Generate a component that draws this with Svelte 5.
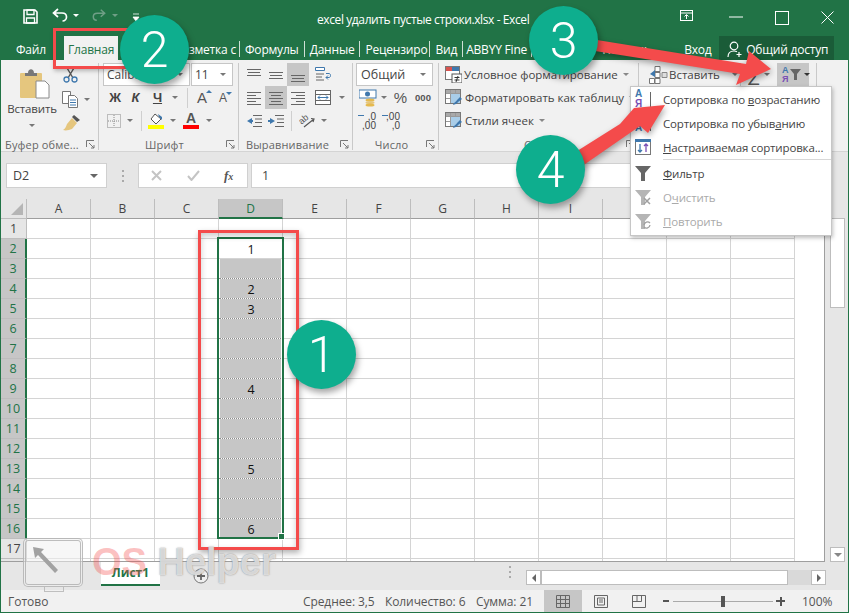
<script>
  const cols = ['A','B','C','D','E','F','G','H','I','J','K','L'];
  const rows = Array.from({ length: 17 }, (_, i) => i + 1);
  const values = { 2: '1', 4: '2', 5: '3', 9: '4', 13: '5', 16: '6' };
  const lineSets = {
    top: [[0,14,2],[1,13,5],[0,14,8]],
    mid: [[0,14,5],[1,13,8],[0,14,11]],
    bot: [[0,14,8],[1,13,11],[0,14,14]],
    left: [[0,14,2],[0,9,5],[0,14,8],[0,9,11],[0,14,14]],
    center: [[0,14,2],[2,12,5],[0,14,8],[2,12,11],[0,14,14]],
    right: [[0,14,2],[5,14,5],[0,14,8],[5,14,11],[0,14,14]]
  };
</script>

{#snippet caret(cls = '')}
  <span class={'caret ' + cls}></span>
{/snippet}
{#snippet lines(name)}
  <svg class="lines" width="14" height="16" viewBox="0 0 14 16">
    {#each lineSets[name] as l}<line x1={l[0]} x2={l[1]} y1={l[2] + .5} y2={l[2] + .5} />{/each}
  </svg>
{/snippet}
{#snippet launcher()}
  <svg class="launcher" width="9" height="9" viewBox="0 0 9 9"><path d="M.5 7V.5H8M3 3l5 5M5 8h3V5" fill="none" stroke="#777"/></svg>
{/snippet}
{#snippet tableIcon()}
  <svg width="18" height="18" viewBox="0 0 18 18">
    <rect x=".5" y=".5" width="15" height="14" fill="#fff" stroke="#777"/>
    <rect x="1" y="1" width="14" height="3" fill="#a9a9a9"/>
    <path d="M5.500 1v13M10.500 1v13M1 4.500h14M1 9.500h14" stroke="#999"/>
    <rect x="6" y="5" width="9" height="9" fill="#a9cde8"/>
    <path d="M8 16c1-3 3-3 4-5l3-3 2 2-4 3c-1 2-3 2-5 3z" fill="#3f78ad"/>
  </svg>
{/snippet}

<div class="app">
  <header class="title">
    <div class="qat">
      <svg class="save" width="15" height="15" viewBox="0 0 15 15"><path d="M1 1h11l2 2v11H1z" fill="none" stroke="#fff" stroke-width="1.600"/><path d="M4 1h7v4.500H4zM3.500 9h8v5h-8z" fill="none" stroke="#fff" stroke-width="1.300"/></svg>
      <svg class="undo" width="16" height="14" viewBox="0 0 16 14"><path d="M6 1 1.500 5 6 9M2 5h8c3 0 4.500 2 4.500 4s-1.500 4-4 4" fill="none" stroke="#fff" stroke-width="1.700"/></svg>
      <span class="tri white"></span>
      <svg class="redo" width="14" height="14" viewBox="0 0 16 14"><path d="M10 1l4.500 4L10 9M14 5H6C3 5 1.500 7 1.500 9s1.500 4 4 4" fill="none" stroke="#6f9f86" stroke-width="1.700"/></svg>
      <span class="tri dim"></span>
      <svg class="more" width="8" height="9" viewBox="0 0 8 9"><path d="M1 1h6M1 4h6L4 8z" fill="#fff" stroke="#fff" stroke-width=".8"/></svg>
    </div>
    <div class="doc">excel удалить пустые строки.xlsx - Excel</div>
    <div class="winbtns">
      <svg class="wopt" width="13" height="11" viewBox="0 0 13 11"><rect x=".5" y=".5" width="12" height="10" fill="none" stroke="#fff"/><path d="M.5 3h12M6.500 9V5M4.500 6.500l2-2 2 2" fill="none" stroke="#fff"/></svg>
      <svg class="wmin" width="14" height="2" viewBox="0 0 14 2"><path d="M0 1h14" stroke="#fff"/></svg>
      <svg class="wmax" width="14" height="14" viewBox="0 0 14 14"><rect x=".5" y=".5" width="13" height="13" fill="none" stroke="#fff"/></svg>
      <svg class="wclose" width="13" height="13" viewBox="0 0 13 13"><path d="M.5.500l12 12M12.500.5l-12 12" stroke="#fff"/></svg>
    </div>
  </header>

  <nav class="tabs">
    <span class="tab file">Файл</span>
    <span class="tab home">Главная</span>
    <span class="tab t-layout">Разметка с</span>
    <span class="tab sep">Формулы</span>
    <span class="tab sep">Данные</span>
    <span class="tab sep t-review">Рецензиро</span>
    <span class="tab sep">Вид</span>
    <span class="tab sep t-abbyy">ABBYY Fine</span>
    <span class="tab t-help">Помощь</span>
    <span class="tab t-login">Вход</span>
    <span class="share">
      <svg width="16" height="17" viewBox="0 0 16 17"><circle cx="7" cy="5" r="3.800" fill="none" stroke="#fff" stroke-width="1.200"/><path d="M1 16c0-4 2-6 6-6 1 0 2 .2 3 .7M12 11v5M9.500 13.500h5" fill="none" stroke="#fff" stroke-width="1.200"/></svg>
      Общий доступ
    </span>
  </nav>

  <section class="ribbon">
    <div class="group g-clip">
      <div class="gbody clip-body">
        <div class="paste">
          <svg width="30" height="31" viewBox="0 0 30 31">
            <rect x="0" y="5" width="22" height="25" rx="1" fill="#e5c67e"/>
            <path d="M5 5h3c0-5 6-5 6 0h3v3H5z" fill="#787878"/>
            <path d="M16 13h9l4 4v13H16z" fill="#fff" stroke="#8a8a8a"/>
          </svg>
          <span class="paste-label">Вставить</span>
          {@render caret('paste-caret')}
        </div>
        <div class="clip-tools">
          <svg width="15" height="15" viewBox="0 0 15 15"><path d="M4 0l6 10M11 0 5 10" stroke="#555" stroke-width="1.400"/><circle cx="3.500" cy="11.500" r="2.500" fill="none" stroke="#3f78ad" stroke-width="1.300"/><circle cx="11.500" cy="11.500" r="2.500" fill="none" stroke="#3f78ad" stroke-width="1.300"/></svg>
          <div class="copy-row">
            <svg width="17" height="17" viewBox="0 0 17 17"><path d="M.5.500h8v12h-8z" fill="#fff" stroke="#777"/><path d="M6.500 4.500h6l3 3v9h-9z" fill="#fff" stroke="#777"/><path d="M8 9h6M8 11.500h6M8 14h6" stroke="#3f78ad"/></svg>
            {@render caret()}
          </div>
          <svg class="brush" width="17" height="16" viewBox="0 0 17 16"><path d="M11 0l6 5-3 2-5-5z" fill="#555"/><path d="M9 3l5 5-5 6c-3 1-6 2-9 1 2-1 3-3 4-6z" fill="#e5c67e"/></svg>
        </div>
      </div>
      <div class="glabel"><span class="label-text">Буфер обме...</span>{@render launcher()}</div>
    </div>

    <div class="group g-font">
      <div class="gbody rows">
        <div class="row font-1">
          <span class="combo"><span>Calibri</span>{@render caret()}</span>
          <span class="combo"><span>11</span>{@render caret()}</span>
        </div>
        <div class="row font-2">
          <b class="fb">Ж</b><b class="fb it">К</b><b class="fb un">Ч</b>
          {@render caret()}
          <i class="vsep"></i>
          <span class="grow big">A<em class="up"></em></span>
          <span class="grow small">A<em class="down"></em></span>
        </div>
        <div class="row font-3">
          <svg width="14" height="14" viewBox="0 0 14 14"><rect x=".5" y=".5" width="13" height="13" fill="none" stroke="#888" stroke-dasharray="1 1"/><path d="M7 1v12M1 7h12" stroke="#888" stroke-dasharray="1 1"/></svg>
          {@render caret()}
          <i class="vsep"></i>
          <span class="color-btn">
            <svg width="15" height="12" viewBox="0 0 15 12"><path d="M6 1l6 5-5 5-5-5z" fill="#fff" stroke="#555"/><path d="M9 1l4 3v3l-3-3z" fill="#3f78ad"/></svg>
            <i class="swatch yellow"></i>
          </span>
          {@render caret()}
          <span class="color-btn"><span class="fc">A</span><i class="swatch redline"></i></span>
          {@render caret()}
        </div>
      </div>
      <div class="glabel"><span class="label-text centered">Шрифт</span>{@render launcher()}</div>
    </div>

    <div class="group g-align">
      <div class="gbody rows">
        <div class="row align-row">
          <span class="cell22">{@render lines('top')}</span>
          <span class="cell22">{@render lines('mid')}</span>
          <span class="cell22 on">{@render lines('bot')}</span>
          <svg class="wrap" width="16" height="16" viewBox="0 0 16 16"><path d="M.5.500h9v3h-9z" fill="#fff" stroke="#3f78ad"/><path d="M1 7h8M1 10h6M1 13h8" stroke="#666"/><path d="M11 6.500h3c2 0 2 4 0 4h-3m2-2-2 2 2 2" fill="none" stroke="#3f78ad"/></svg>
        </div>
        <div class="row align-row">
          <span class="cell22">{@render lines('left')}</span>
          <span class="cell22 on">{@render lines('center')}</span>
          <span class="cell22">{@render lines('right')}</span>
          <svg class="wrap" width="16" height="15" viewBox="0 0 16 15"><rect x=".5" y=".5" width="15" height="14" fill="#fff" stroke="#666"/><path d="M1 4.500h14M1 10.500h14" stroke="#666"/><path d="M3 7.500h10M5 5.500l-2 2 2 2M11 5.500l2 2-2 2" fill="none" stroke="#3f78ad"/></svg>
          {@render caret()}
        </div>
        <div class="row align-3">
          <svg width="16" height="12" viewBox="0 0 16 12"><path d="M7 .5h9M9 4h7M9 7.500h7M7 11.500h9" stroke="#666"/><path d="M6 3 1 6l5 3zM6 5h1v2H6z" fill="#3f78ad"/></svg>
          <svg width="16" height="12" viewBox="0 0 16 12"><path d="M7 .5h9M9 4h7M9 7.500h7M7 11.500h9" stroke="#666"/><path d="M2 3l5 3-5 3zM0 5h3v2H0z" fill="#3f78ad"/></svg>
          <i class="vsep"></i>
          <svg width="16" height="16" viewBox="0 0 16 16"><path d="M5 14 15 6M12 5.500l3 .5-1 3" fill="none" stroke="#555" stroke-width="1.200"/><text x="0" y="9" class="ab" transform="rotate(-40 5 7)">ab</text></svg>
          {@render caret()}
        </div>
      </div>
      <div class="glabel"><span class="label-text al-label">Выравнивание</span>{@render launcher()}</div>
    </div>

    <div class="group g-num">
      <div class="gbody rows">
        <div class="row num-1"><span class="combo wide"><span>Общий</span>{@render caret()}</span></div>
        <div class="row num-2">
          <svg width="18" height="18" viewBox="0 0 18 18"><rect x="0" y="1" width="17" height="8" fill="#fff" stroke="#3f78ad"/><circle cx="8.500" cy="5" r="2.500" fill="#3f78ad"/><ellipse cx="11" cy="11" rx="4.500" ry="1.600" fill="#e5b94e"/><ellipse cx="11" cy="13.500" rx="4.500" ry="1.600" fill="#e5c67e"/><ellipse cx="11" cy="16" rx="4.500" ry="1.600" fill="#e5b94e"/></svg>
          {@render caret()}
          <span class="pct">%</span>
          <span class="thou">000</span>
        </div>
        <div class="row num-3">
          <span class="dec"><em class="larr"></em>,0<br />,00</span>
          <span class="dec"><em class="rarr"></em>,00<br />,0</span>
        </div>
      </div>
      <div class="glabel"><span class="label-text centered">Число</span>{@render launcher()}</div>
    </div>

    <div class="group g-styles">
      <div class="gbody rows">
        <div class="row style-row">
          <svg width="17" height="17" viewBox="0 0 17 17"><rect x=".5" y=".5" width="14" height="13" fill="#fff" stroke="#777"/><rect x="1" y="1" width="6" height="4" fill="#d9534f"/><rect x="7" y="1" width="7" height="4" fill="#3f78ad"/><rect x="7" y="8" width="10" height="9" fill="#fff" stroke="#555"/><path d="M9.500 11.500h5M9.500 14h5M13 10l-2 6" stroke="#333" fill="none"/></svg>
          <span>Условное форматирование</span><span class="tiny-caret"></span>
        </div>
        <div class="row style-row">{@render tableIcon()}<span>Форматировать как таблицу</span><span class="tiny-caret"></span></div>
        <div class="row style-row">{@render tableIcon()}<span>Стили ячеек</span><span class="tiny-caret"></span></div>
      </div>
      <div class="glabel"><span class="label-text styles-label">Стили</span>{@render launcher()}</div>
    </div>

    <div class="group g-cells">
      <div class="gbody rows">
        <div class="row cells-row">
          <svg width="19" height="18" viewBox="0 0 19 18"><path d="M6 .5h5v5H6zM6 6.500h5v5H6zM.5 12.500h5v5h-5zM6 12.500h5v5H6z" fill="#fff" stroke="#777"/><path d="M13 6.500h5v5h-5z" fill="#ddd" stroke="#888"/><path d="M6 4 1 8l5 3z" fill="#3f78ad"/></svg>
          <span>Вставить</span>{@render caret()}
        </div>
      </div>
      <div class="glabel"></div>
    </div>

    <div class="group g-edit">
      <div class="gbody rows">
        <div class="row edit-row">
          <span class="sigma">∑</span>
          {@render caret()}
          <span class="sort-btn">
            <span class="az"><span class="a-l">A</span><span class="ya-l">Я</span></span>
            <svg width="11" height="11" viewBox="0 0 11 11"><path d="M0 0h11L7 5v6H4V5z" fill="#666"/></svg>
            {@render caret()}
          </span>
        </div>
      </div>
      <div class="glabel"></div>
    </div>
  </section>

  <section class="fbar">
    <div class="namebox"><span>D2</span>{@render caret('dark')}</div>
    <div class="grip"><i></i><i></i><i></i></div>
    <div class="fxbox">
      <svg width="11" height="11" viewBox="0 0 11 11"><path d="M1 1l9 9M10 1l-9 9" stroke="#c4c4c4" stroke-width="2"/></svg>
      <svg width="13" height="11" viewBox="0 0 13 11"><path d="M1 6l3.500 4L12 1" fill="none" stroke="#c4c4c4" stroke-width="2"/></svg>
      <span class="fx">f<small>x</small></span>
    </div>
    <div class="finput">1</div>
  </section>

  <section class="sheet">
    <div class="gridwrap">
      <div class="colhead">
        <div class="corner"><span></span></div>
        {#each cols as c}
          <div class={'ch' + (c === 'D' ? ' active' : '')}>{c}</div>
        {/each}
      </div>
      {#each rows as r}
        <div class="grow-row">
          <div class={'rh' + (r >= 2 && r <= 16 ? ' active' : '')}>{r}</div>
          {#each cols as c}
            {#if c === 'D' && r >= 2 && r <= 16}
              <div class={'cell sel' + (r === 2 ? ' first' : '')}><span>{values[r] ?? ''}</span></div>
            {:else}
              <div class="cell"></div>
            {/if}
          {/each}
        </div>
      {/each}
      <div class="grow-row tail">
        <div class="rh"></div>
        {#each cols as c}<div class="cell"></div>{/each}
      </div>
    </div>
    <div class="vscroll">
      <div class="vthumb"></div>
      <div class="vdown"><i></i></div>
    </div>
  </section>

  <section class="sheetbar">
    <div class="sheettab">Лист1</div>
    <div class="addsheet">
      <svg width="16" height="16" viewBox="0 0 16 16"><circle cx="8" cy="8" r="7" fill="#eee" stroke="#777"/><path d="M8 4v8M4 8h8" stroke="#666" stroke-width="1.800"/></svg>
    </div>
    <div class="grip h"><i></i><i></i><i></i></div>
    <div class="hscroll">
      <span class="hbtn"><i class="l"></i></span>
      <span class="hthumb"></span>
      <span class="hgap"></span>
      <span class="hbtn"><i class="r"></i></span>
    </div>
  </section>

  <footer class="status">
    <span class="ready">Готово</span>
    <span class="stat s1">Среднее: 3,5</span>
    <span class="stat s2">Количество: 6</span>
    <span class="stat s3">Сумма: 21</span>
    <span class="vbtn on">
      <svg width="14" height="13" viewBox="0 0 14 13"><path d="M.5.500h13v12H.5zM.5 4.500h13M.5 8.500h13M4.500.5v12M9.500.5v12" fill="none" stroke="#666"/></svg>
    </span>
    <span class="vbtn">
      <svg width="14" height="13" viewBox="0 0 14 13"><path d="M.5.500h13v12H.5z" fill="none" stroke="#666"/><path d="M3.500 3v7h7V3zM5 5h4M5 7h4" fill="none" stroke="#666"/></svg>
    </span>
    <span class="vbtn">
      <svg width="14" height="13" viewBox="0 0 14 13"><path d="M.5.500h13v12H.5zM.5 6.500h9v-6M5 .5v6" fill="none" stroke="#666"/></svg>
    </span>
    <span class="zoomctl">
      <i class="zminus"></i>
      <span class="ztrack"><i></i></span>
      <i class="zplus"></i>
    </span>
    <span class="zval">100%</span>
  </footer>

  <div class="menu">
    <div class="mi">
      <span class="mic"><span class="az-m"><span class="a-l">A</span><span class="ya-l">Я</span></span><i class="marr"></i></span>
      <span>Сортировка по <u>в</u>озрастанию</span>
    </div>
    <div class="mi">
      <span class="mic"><span class="az-m"><span class="ya-l">Я</span><span class="a-l">A</span></span><i class="marr"></i></span>
      <span>Сортировка по убыв<u>а</u>нию</span>
    </div>
    <div class="mi">
      <span class="mic">
        <svg width="16" height="16" viewBox="0 0 16 16"><rect x=".5" y=".5" width="15" height="15" fill="#fff" stroke="#777"/><rect x="0" y="0" width="16" height="3" fill="#3f78ad"/><path d="M5 5v8M3 11l2 2 2-2" fill="none" stroke="#3f78ad" stroke-width="1.300"/><path d="M11 13V5M9 7l2-2 2 2" fill="none" stroke="#7a4fb5" stroke-width="1.300"/></svg>
      </span>
      <span><u>Н</u>астраиваемая сортировка...</span>
    </div>
    <div class="msep"></div>
    <div class="mi">
      <span class="mic"><svg width="16" height="15" viewBox="0 0 16 15"><path d="M0 0h16L10 7v8H6V7z" fill="#666"/></svg></span>
      <span><u>Ф</u>ильтр</span>
    </div>
    <div class="mi off">
      <span class="mic"><svg width="16" height="15" viewBox="0 0 16 15"><path d="M0 0h16L10 7v8H6V7z" fill="#b5b5b5"/><path d="M9 8l6 6M15 8l-6 6" stroke="#a0a0a0" stroke-width="1.500"/></svg></span>
      <span>О<u>ч</u>истить</span>
    </div>
    <div class="mi off">
      <span class="mic"><svg width="16" height="15" viewBox="0 0 16 15"><path d="M0 0h16L10 7v8H6V7z" fill="#b5b5b5"/><path d="M9 11a3.500 3.500 0 0 1 6-2M15 11a3.500 3.500 0 0 1-6 2" fill="none" stroke="#a0a0a0" stroke-width="1.300"/></svg></span>
      <span><u>П</u>овторить</span>
    </div>
  </div>

  <div class="sel-box"><i class="handle"></i></div>
  <div class="redbox r1"></div>
  <div class="redbox r2"></div>

  <svg class="arrows" width="849" height="613" viewBox="0 0 849 613">
    <polygon points="597,40 746,64 749,51 771,69 736,85 740,74 595,51" />
    <polygon points="566,158 620,124 634,108 665,105 648,133 640,126 575,171" />
  </svg>

  <div class="badge b1">1</div>
  <div class="badge b2">2</div>
  <div class="badge b3">3</div>
  <div class="badge b4">4</div>

  <div class="wm">
    <div class="wm-box">
      <svg width="30" height="30" viewBox="0 0 30 30"><path d="M1 1l11 2-3 3 17 18-3 3L6 9l-3 3z" fill="#a2a2a2"/></svg>
      <i class="wm-foot"></i>
    </div>
    <div class="wm-text"><span class="os">OS</span> <span class="helper">Helper</span></div>
  </div>
</div>

<style>
  :global(body) { margin: 0; background: #e6e6e6; }
  .app {
    position: relative; width: 849px; height: 613px; overflow: hidden;
    display: flex; flex-direction: column;
    font-family: "Open Sans", "Noto Sans", sans-serif; font-size: 12px; color: #444;
    background: #e6e6e6; box-sizing: border-box;
    border-left: 1px solid #217346; border-right: 1px solid #217346; border-bottom: 1px solid #217346;
  }
  svg { display: block; flex: none; }

  /* title */
  .title { height: 36px; flex: none; background: #217346; margin: 0 -1px; display: flex; position: relative; color: #fff; }
  .qat { width: 317px; display: flex; align-items: flex-start; flex: none; }
  .save { margin: 9px 0 0 23px; }
  .undo { margin: 8px 0 0 14px; }
  .redo { margin: 8px 0 0 13px; }
  .more { margin: 13px 0 0 14px; }
  .tri { width: 0; height: 0; border: 3px solid transparent; border-bottom: 0; margin: 14px 0 0 5px; }
  .tri.white { border-top: 3px solid #fff; }
  .tri.dim { border-top: 3px solid #6f9f86; margin-left: 6px; }
  .doc { margin-top: 12px; width: 363px; font-size: 12px; letter-spacing: -.4px; line-height: 16px; white-space: nowrap; }
  .winbtns { display: flex; align-items: flex-start; flex: 1; }
  .wopt { margin-top: 10px; }
  .wmin { margin: 16px 0 0 36px; }
  .wmax { margin: 11px 0 0 32px; }
  .wclose { margin: 11px 0 0 32px; }

  /* tabs */
  .tabs { height: 24px; flex: none; background: #217346; margin: 0 -1px; display: flex; align-items: stretch; color: #fff; }
  .tab { display: flex; align-items: center; padding-top: 2px; white-space: nowrap; overflow: hidden; font-size: 12px; letter-spacing: -.2px; box-sizing: border-box; }
  .file { width: 64px; padding-left: 16px; }
  .home { width: 54px; background: #f1f1f1; color: #217346; padding-left: 4px; }
  .t-layout { margin: 5px 0 3px 58px; width: 64px; justify-content: flex-end; padding: 0 3px 0 0; border-right: 1px solid #cfe0d6; }
  .sep { padding: 0 5px; border-right: 1px solid #cfe0d6; margin: 5px 0 3px; }
  .t-review { width: 70px; }
  .t-abbyy { width: 69px; padding-left: 3px; }
  .t-help { margin-left: 70px; width: 75px; }
  .t-login { width: 35px; margin-left: 7px; }
  .share { width: 115px; background: #1a5c38; display: flex; align-items: center; gap: 3px; padding: 2px 0 0 8px; box-sizing: border-box; white-space: nowrap; font-size: 12px; letter-spacing: -.2px; }

  /* ribbon */
  .ribbon { height: 92px; flex: none; background: #f1f1f1; border-bottom: 1px solid #d4d4d4; box-sizing: border-box; display: flex; padding-top: 3px; }
  .group { display: flex; flex-direction: column; border-right: 1px solid #c9c9c9; box-sizing: border-box; height: 87px; flex: none; position: relative; }
  .g-clip { width: 98px; }
  .g-font { width: 140px; }
  .g-align { width: 114px; }
  .g-num { width: 86px; }
  .g-styles { width: 200px; }
  .g-cells { width: 102px; }
  .g-edit { width: 76px; }
  .gbody { height: 69px; flex: none; }
  .rows { display: grid; grid-template-rows: 23px 23px 23px; }
  .glabel { display: flex; align-items: center; height: 18px; box-sizing: border-box; padding: 6px 3px 0 4px; justify-content: flex-end; position: relative; }
  .label-text { margin-right: auto; letter-spacing: .15px; color: #666; white-space: nowrap; font-size: 11px; }
  .label-text.centered { margin: 0 auto; }
  .al-label { margin-left: 3px; }
  .styles-label { margin-left: 81px; }
  .launcher { flex: none; }
  .row { display: flex; align-items: center; }
  .caret { display: inline-block; width: 0; height: 0; border: 3.500px solid transparent; border-bottom: 0; border-top: 3.500px solid #777; flex: none; }
  .caret.dark { border-width: 4px; border-bottom: 0; border-top-color: #666; }

  .clip-body { display: flex; }
  .paste { width: 60px; display: flex; flex-direction: column; align-items: center; padding: 5px 0 0 2px; box-sizing: border-box; }
  .paste svg { margin-left: 5px; }
  .paste-label { margin-top: 2px; color: #444; font-size: 11.500px; letter-spacing: -.15px; line-height: 16px; }
  :global(.paste-caret) { margin-top: 7px; }
  .clip-tools { display: flex; flex-direction: column; padding-left: 1px; }
  .clip-tools > svg:first-child { margin: 5px 0 0 1px; }
  .copy-row { display: flex; align-items: center; gap: 5px; margin-top: 8px; }
  .brush { margin: 7px 0 0 1px; }

  .combo { height: 23px; background: #fff; border: 1px solid #c6c6c6; box-sizing: border-box; display: flex; align-items: center; justify-content: space-between; padding: 0 6px 0 3px; font-size: 12px; color: #444; }
  .font-1 { padding-left: 4px; gap: 1px; }
  .font-1 .combo:first-child { width: 87px; }
  .font-1 .combo:last-child { width: 42px; }
  .font-2, .font-3 { display: grid; align-items: center; justify-items: center; }
  .font-2 { grid-template-columns: 20px 21px 23px 12px 12px 18px 24px; padding-left: 6px; }
  .font-3 { grid-template-columns: 17px 16px 6px 24px 10px 26px 10px; padding-left: 6px; }
  .fb { font-family: "Liberation Sans", sans-serif; font-size: 13px; color: #444; }
  .fb.it { font-style: italic; }
  .fb.un { text-decoration: underline; }
  .vsep { display: block; width: 1px; height: 20px; background: #cfcfcf; }
  .grow { position: relative; color: #555; font-family: "Liberation Sans", sans-serif; }
  .grow.big { font-size: 15px; }
  .grow.small { font-size: 12px; }
  .grow em { position: absolute; right: -5px; top: 1px; border: 3px solid transparent; }
  .up { border-top: 0 !important; border-bottom: 3px solid #3f78ad !important; }
  .down { border-bottom: 0 !important; border-top: 3px solid #3f78ad !important; }
  .color-btn { display: flex; flex-direction: column; align-items: center; width: 16px; }
  .fc { font-family: "Liberation Sans", sans-serif; font-weight: bold; font-size: 14px; line-height: 13px; color: #555; }
  .swatch { display: block; width: 16px; height: 4px; }
  .yellow { background: #ffff00; }
  .redline { background: #ff0000; }

  .align-row { display: flex; padding-left: 4px; }
  .cell22 { width: 22px; height: 23px; display: flex; align-items: center; justify-content: center; flex: none; }
  .cell22.on { background: #c6c6c6; }
  .lines line { stroke: #666; stroke-width: 1; }
  .wrap { margin: 0 8px 0 6px; }
  .align-3 { display: grid; grid-template-columns: 22px 22px 8px 24px 10px; padding-left: 4px; justify-items: center; }
  .ab { font-size: 9px; fill: #555; font-family: "Liberation Sans", sans-serif; }

  .num-1 { padding-left: 3px; }
  .combo.wide { width: 77px; font-size: 12.500px; padding-left: 4px; }
  .num-2 { display: grid; grid-template-columns: 22px 10px 23px 22px; padding-left: 4px; align-items: center; justify-items: center; }
  .pct { font-family: "Liberation Sans", sans-serif; font-size: 15px; color: #555; }
  .thou { font-family: "Liberation Sans", sans-serif; font-size: 9.500px; font-weight: bold; color: #555; }
  .num-3 { display: flex; padding-left: 3px; }
  .dec { width: 24px; position: relative; font-family: "Liberation Sans", sans-serif; font-size: 10px; line-height: 9px; color: #444; text-align: right; padding-right: 4px; box-sizing: border-box; }
  .dec em { position: absolute; left: 2px; top: 3px; width: 6px; height: 1px; background: #3f78ad; }

  .style-row { padding-left: 6px; gap: 2px; font-size: 11.500px; white-space: nowrap; letter-spacing: -.02px; }
  .tiny-caret { width: 0; height: 0; border: 3px solid transparent; border-bottom: 0; border-top: 3px solid #888; margin-left: 3px; }
  .cells-row { padding-left: 10px; font-size: 11.500px; }
  .cells-row span:not(.caret) { margin: 0 12px 0 1px; }
  .edit-row { position: relative; padding-left: 6px; }
  .sigma { font-family: "Liberation Sans", sans-serif; font-size: 19px; color: #555; width: 17px; }
  .sort-btn { width: 32px; height: 23px; background: #c6c6c6; margin-left: 7px; display: flex; align-items: center; padding-left: 5px; gap: 1px; box-sizing: border-box; }
  .sort-btn :global(.caret) { margin-left: 2px; border-top-color: #333; }
  .az, .az-m { display: flex; flex-direction: column; font-family: "Liberation Sans", sans-serif; font-size: 9px; line-height: 9px; font-weight: bold; width: 8px; }
  .a-l { color: #3f78ad; }
  .ya-l { color: #7a4fb5; }

  /* formula bar */
  .fbar { height: 47px; flex: none; box-sizing: border-box; display: flex; align-items: flex-start; padding-top: 11px; }
  .namebox { width: 101px; height: 25px; margin-left: 5px; background: #fff; border: 1px solid #d0d0d0; box-sizing: border-box; display: flex; align-items: center; justify-content: space-between; padding: 0 8px 0 6px; font-size: 12.500px; }
  .grip { display: flex; flex-direction: column; gap: 3px; width: 31px; align-items: center; padding-top: 7px; }
  .grip i { display: block; width: 2px; height: 2px; background: #aaa; }
  .fxbox { width: 110px; height: 25px; background: #fff; border: 1px solid #d0d0d0; box-sizing: border-box; display: flex; align-items: center; gap: 25px; padding-left: 12px; }
  .fx { font-family: "Liberation Serif", serif; font-style: italic; font-weight: bold; font-size: 13px; color: #555; margin-left: -1px; }
  .fx small { font-size: 10px; }
  .finput { width: 579px; height: 25px; margin-left: 3px; background: #fff; border: 1px solid #d0d0d0; box-sizing: border-box; padding: 0 0 0 10px; display: flex; align-items: center; font-size: 12.500px; }

  /* sheet */
  .sheet { height: 363px; flex: none; display: flex; position: relative; }
  .gridwrap { width: 825px; height: 363px; overflow: hidden; border-bottom: 1px solid #9e9e9e; box-sizing: border-box; background: #fff; border-right: 1px solid #9e9e9e; }
  .colhead { display: flex; height: 20px; background: #e6e6e6; }
  .corner { width: 26px; flex: none; border-right: 1px solid #bdbdbd; border-bottom: 1px solid #bdbdbd; box-sizing: border-box; position: relative; }
  .corner span { position: absolute; right: 3px; bottom: 3px; width: 0; height: 0; border-left: 12px solid transparent; border-bottom: 12px solid #b5b5b5; }
  .ch { width: 64px; flex: none; box-sizing: border-box; text-align: center; line-height: 19px; border-right: 1px solid #bdbdbd; border-bottom: 1px solid #9e9e9e; font-size: 12px; color: #444; }
  .ch.active { background: #c6c6c6; color: #217346; border-bottom: 2px solid #217346; }
  .grow-row { display: flex; height: 20px; }
  .grow-row.tail { height: 3px; }
  .rh { width: 26px; flex: none; box-sizing: border-box; background: #e6e6e6; border-right: 1px solid #bdbdbd; border-bottom: 1px solid #bdbdbd; text-align: center; line-height: 19px; font-size: 12.500px; color: #444; }
  .rh.active { background: #c6c6c6; color: #217346; border-right: 2px solid #217346; }
  .cell { width: 64px; flex: none; box-sizing: border-box; border-right: 1px solid #d4d4d4; border-bottom: 1px solid #d4d4d4; text-align: center; line-height: 21px; color: #111; font-size: 12.500px; }
  .cell.sel { background: linear-gradient(#c6c6c6, #c6c6c6) 1px 0 / 61px 100% no-repeat; border-right: 0; border-bottom: 1px dotted #8a8a8a; }
  .cell.sel.first { background: #fff; border-bottom: 1px solid #d4d4d4; }
  .vscroll { width: 23px; flex: none; box-sizing: border-box; padding: 19px 0 0 5px; display: flex; flex-direction: column; justify-content: space-between; height: 363px; }
  .vthumb { width: 15px; height: 90px; background: #fff; border: 1px solid #bdbdbd; box-sizing: border-box; }
  .vdown { width: 15px; height: 15px; background: #fff; border: 1px solid #bdbdbd; box-sizing: border-box; display: flex; align-items: center; justify-content: center; }
  .vdown i { width: 0; height: 0; border: 4px solid transparent; border-bottom: 0; border-top: 4px solid #888; }

  /* sheet tabs */
  .sheetbar { height: 28px; flex: none; display: flex; align-items: flex-start; border-bottom: 1px solid #c9c9c9; margin-bottom: -1px; }
  .sheettab { width: 59px; height: 24px; margin-left: 100px; background: #fff; border-bottom: 2px solid #217346; box-sizing: border-box; color: #217346; font-weight: bold; text-align: center; line-height: 22px; font-size: 12px; }
  .addsheet { margin: 6px 0 0 33px; }
  .grip.h { width: 16px; margin-left: 293px; padding-top: 4px; }
  .hscroll { display: flex; margin: 8px 0 0 8px; height: 15px; width: 300px; }
  .hbtn { width: 15px; height: 15px; background: #fff; border: 1px solid #bdbdbd; box-sizing: border-box; display: flex; align-items: center; justify-content: center; flex: none; }
  .hbtn i { width: 0; height: 0; border: 4px solid transparent; }
  .hbtn i.l { border-left: 0; border-right: 4px solid #666; }
  .hbtn i.r { border-right: 0; border-left: 4px solid #666; }
  .hthumb { width: 247px; background: #fff; border: 1px solid #bdbdbd; box-sizing: border-box; }
  .hgap { width: 23px; background: #d9d9d9; }

  /* status */
  .status { height: 22px; flex: none; display: flex; align-items: center; background: #f1f1f1; position: relative; color: #555; font-size: 12px; }
  .ready { margin-left: 7px; width: 295px; }
  .stat { flex: none; white-space: nowrap; letter-spacing: -.1px; }
  .s1 { width: 82px; }
  .s2 { width: 91px; }
  .s3 { width: 68px; }
  .vbtn { width: 38px; height: 22px; display: flex; align-items: center; justify-content: center; flex: none; }
  .vbtn.on { background: #c6c6c6; }
  .zoomctl { display: flex; align-items: center; margin-left: 5px; }
  .zminus { display: block; width: 6px; height: 2px; background: #555; margin-right: 4px; }
  .ztrack { display: block; width: 100px; height: 1px; background: #aaa; position: relative; }
  .ztrack i { position: absolute; left: 48px; top: -5px; width: 4px; height: 11px; background: #555; }
  .zplus { display: block; width: 9px; height: 9px; margin-left: 3px; background: linear-gradient(#555,#555) center/9px 2px no-repeat, linear-gradient(#555,#555) center/2px 9px no-repeat; }
  .zval { margin-left: 17px; color: #555; }

  /* overlays */
  .menu { position: absolute; left: 629px; top: 86px; width: 202px; height: 150px; background: #fff; border: 1px solid #c6c6c6; box-sizing: border-box; box-shadow: 1px 2px 4px rgba(0,0,0,.25); color: #444; font-size: 11.500px; }
  .mi { height: 24px; display: flex; align-items: center; white-space: nowrap; letter-spacing: -.15px; }
  .mic { width: 32px; padding-left: 4px; box-sizing: border-box; display: flex; flex: none; align-items: center; gap: 3px; }
  .az-m { font-size: 10px; line-height: 10px; }
  .marr { width: 1px; height: 15px; background: #666; margin-left: 4px; }
  .msep { height: 1px; margin: 0 0 1px 32px; background: #d8d8d8; }
  .off { color: #aaa; }

  .sel-box { position: absolute; left: 216px; top: 237px; width: 67px; height: 302px; border: 2px solid #217346; box-sizing: border-box; pointer-events: none; }
  .handle { position: absolute; right: -3px; bottom: -3px; width: 5px; height: 5px; background: #217346; border: 1px solid #fff; }
  .redbox { position: absolute; border: 3px solid #f44b4b; box-sizing: border-box; }
  .r1 { left: 197px; top: 230px; width: 101px; height: 320px; box-shadow: 1px 3px 6px rgba(0,0,0,.3), inset 0 3px 6px rgba(0,0,0,.2); }
  .r2 { left: 52px; top: 28px; width: 80px; height: 41px; box-shadow: 1px 2px 4px rgba(0,0,0,.25); }
  .arrows { position: absolute; left: -1px; top: 0; filter: drop-shadow(1px 3px 3px rgba(0,0,0,.35)); }
  .arrows polygon { fill: #f44b4b; }
  .badge { position: absolute; width: 69px; height: 69px; border-radius: 50%; background: #0eae8e; color: #fff; display: flex; align-items: center; justify-content: center; font-family: Roboto, "Open Sans", sans-serif; font-weight: 300; font-size: 50px; box-shadow: 2px 4px 6px rgba(0,0,0,.35); }
  .b1 { left: 286px; top: 320px; }
  .b2 { left: 119px; top: 15px; }
  .b3 { left: 528px; top: 6px; }
  .b4 { left: 515px; top: 135px; }

  .wm { position: absolute; left: 22px; top: 538px; display: flex; pointer-events: none; }
  .wm-box { width: 60px; height: 49px; border: 3px double rgba(170,170,170,.75); border-radius: 5px; box-sizing: border-box; padding: 5px 0 0 6px; background: rgba(240,240,240,.55); position: relative; }
  .wm-foot { position: absolute; left: 18px; bottom: -8px; width: 18px; height: 4px; border: 1px solid rgba(170,170,170,.7); border-top: 0; }
  .wm-text { margin: 2px 0 0 9px; font-family: "Liberation Sans", sans-serif; font-weight: bold; font-size: 38px; line-height: 44px; white-space: nowrap; }
  .os { color: rgba(244,75,75,.35); }
  .helper { color: rgba(240,240,240,.8); text-shadow: 0 0 1.500px rgba(110,110,110,.9); }
</style>
